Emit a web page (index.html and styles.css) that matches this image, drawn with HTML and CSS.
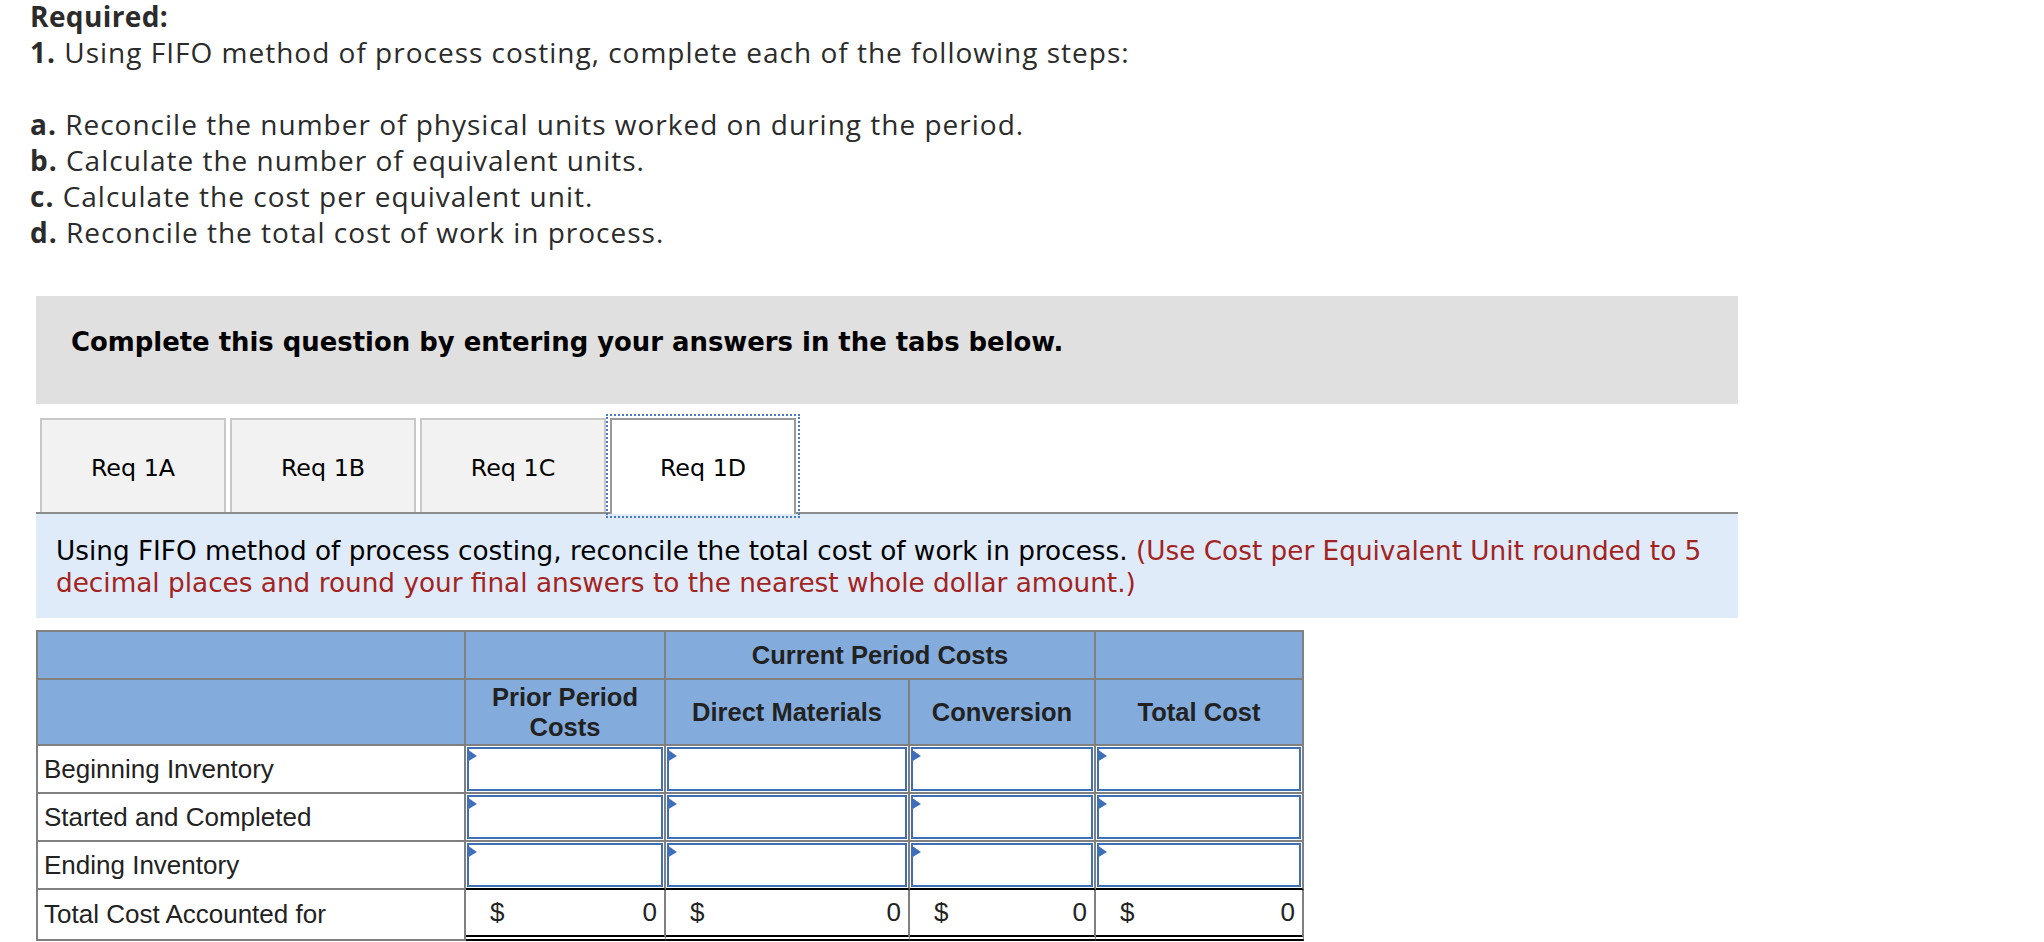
FILE: index.html
```html
<!DOCTYPE html>
<html lang="en">
<head>
<meta charset="utf-8">
<title>FIFO process costing – Req 1D</title>
<link rel="stylesheet" href="styles.css">
</head>
<body>
<main class="page">
  <div class="prompt">
    <p class="prompt-title">Required:</p>
    <p class="prompt-lead"><b>1.</b> Using FIFO method of process costing, complete each of the following steps:</p>
    <ul class="steps">
      <li><b>a.</b> Reconcile the number of physical units worked on during the period.</li>
      <li><b>b.</b> Calculate the number of equivalent units.</li>
      <li><b>c.</b> Calculate the cost per equivalent unit.</li>
      <li><b>d.</b> Reconcile the total cost of work in process.</li>
    </ul>
  </div>

  <section class="workspace">
    <div class="notice">Complete this question by entering your answers in the tabs below.</div>

    <div class="tabs" role="tablist">
      <button class="tab" role="tab" type="button">Req 1A</button>
      <button class="tab" role="tab" type="button">Req 1B</button>
      <button class="tab" role="tab" type="button">Req 1C</button>
      <button class="tab is-active" role="tab" type="button" aria-selected="true">Req 1D</button>
    </div>

    <div class="panel" role="tabpanel">
      <p class="directions">Using FIFO method of process costing, reconcile the total cost of work in process. <span class="hint">(Use Cost per Equivalent Unit rounded to 5 decimal places and round your final answers to the nearest whole dollar amount.)</span></p>

      <table class="cost-table">
        <colgroup>
          <col class="c-label">
          <col class="c-prior">
          <col class="c-dm">
          <col class="c-conv">
          <col class="c-total">
        </colgroup>
        <thead>
          <tr class="head-top">
            <th></th>
            <th></th>
            <th colspan="2">Current Period Costs</th>
            <th></th>
          </tr>
          <tr class="head-sub">
            <th></th>
            <th>Prior Period Costs</th>
            <th>Direct Materials</th>
            <th>Conversion</th>
            <th>Total Cost</th>
          </tr>
        </thead>
        <tbody>
          <tr class="row">
            <td class="label">Beginning Inventory</td>
            <td class="entry"><div class="field"><input type="text" aria-label="Beginning Inventory prior period costs"></div></td>
            <td class="entry"><div class="field"><input type="text" aria-label="Beginning Inventory direct materials"></div></td>
            <td class="entry"><div class="field"><input type="text" aria-label="Beginning Inventory conversion"></div></td>
            <td class="entry"><div class="field"><input type="text" aria-label="Beginning Inventory total cost"></div></td>
          </tr>
          <tr class="row">
            <td class="label">Started and Completed</td>
            <td class="entry"><div class="field"><input type="text" aria-label="Started and Completed prior period costs"></div></td>
            <td class="entry"><div class="field"><input type="text" aria-label="Started and Completed direct materials"></div></td>
            <td class="entry"><div class="field"><input type="text" aria-label="Started and Completed conversion"></div></td>
            <td class="entry"><div class="field"><input type="text" aria-label="Started and Completed total cost"></div></td>
          </tr>
          <tr class="row row-last">
            <td class="label">Ending Inventory</td>
            <td class="entry"><div class="field"><input type="text" aria-label="Ending Inventory prior period costs"></div></td>
            <td class="entry"><div class="field"><input type="text" aria-label="Ending Inventory direct materials"></div></td>
            <td class="entry"><div class="field"><input type="text" aria-label="Ending Inventory conversion"></div></td>
            <td class="entry"><div class="field"><input type="text" aria-label="Ending Inventory total cost"></div></td>
          </tr>
          <tr class="row-total">
            <td class="label">Total Cost Accounted for</td>
            <td class="sum"><div class="sum-inner"><span>$</span><span>0</span></div></td>
            <td class="sum"><div class="sum-inner"><span>$</span><span>0</span></div></td>
            <td class="sum"><div class="sum-inner"><span>$</span><span>0</span></div></td>
            <td class="sum"><div class="sum-inner"><span>$</span><span>0</span></div></td>
          </tr>
        </tbody>
      </table>
    </div>
  </section>
</main>
</body>
</html>
```

FILE: styles.css
```css
* {
  box-sizing: border-box;
}

body {
  margin: 0;
  background: #ffffff;
}

/* ---------- prompt ---------- */
.prompt {
  margin-top: -2px;
  padding-left: 30px;
  font-family: "Open Sans", Lato, sans-serif;
  font-size: 28px;
  line-height: 36px;
  letter-spacing: 1px;
  color: #2b2b2b;
}

.prompt p {
  margin: 0;
}

.prompt-title {
  font-weight: 700;
  letter-spacing: 0.4px;
}

.prompt-lead {
  margin-bottom: 36px !important;
}

.prompt b {
  font-weight: 700;
}

.steps {
  list-style: none;
  margin: 0;
  padding: 0;
}

/* ---------- workspace ---------- */
.workspace {
  margin: 46px 0 0 36px;
  width: 1702px;
}

.notice {
  height: 108px;
  padding: 30px 35px 0;
  background: #e0e0e0;
  font-family: "DejaVu Sans", Verdana, sans-serif;
  font-weight: 700;
  font-size: 25.9px;
  line-height: 32px;
  color: #000;
}

/* ---------- tabs ---------- */
.tabs {
  display: flex;
  gap: 4px;
  padding: 14px 0 0 4px;
  border-bottom: 2px solid #8c8c8c;
}

.tab {
  display: flex;
  align-items: center;
  justify-content: center;
  width: 186px;
  height: 94px;
  margin: 0;
  padding: 4px 0 0;
  border: 2px solid #c8c8c8;
  border-bottom: 0;
  background: #f2f2f2;
  font-family: "DejaVu Sans", Verdana, sans-serif;
  font-size: 23.8px;
  color: #000;
  cursor: pointer;
}

.tab.is-active {
  height: 96px;
  margin-bottom: -2px;
  padding-bottom: 2px;
  background: #ffffff;
  border-color: #999999;
  outline: 2px dotted #4a7cc4;
  outline-offset: 2px;
}

/* ---------- panel ---------- */
.directions {
  margin: 0;
  padding: 21px 20px 19px;
  background: #dfebf8;
  font-family: "DejaVu Sans", Verdana, sans-serif;
  font-size: 26.3px;
  line-height: 32px;
  color: #000;
}

.hint {
  color: #a3231f;
}

/* ---------- table ---------- */
.cost-table {
  margin-top: 12px;
  width: 1268px;
  table-layout: fixed;
  border-collapse: separate;
  border-spacing: 0;
  border-top: 2px solid #808080;
  border-left: 2px solid #808080;
  font-family: "Liberation Sans", Arial, sans-serif;
  color: #222;
}

.c-label { width: 428px; }
.c-prior { width: 200px; }
.c-dm    { width: 244px; }
.c-conv  { width: 186px; }
.c-total { width: 208px; }

.cost-table th,
.cost-table td {
  padding: 0;
  border-right: 2px solid #808080;
  border-bottom: 2px solid #808080;
  vertical-align: middle;
}

.cost-table th {
  background: #83acdd;
  font-weight: 700;
  font-size: 25.5px;
  line-height: 30px;
  text-align: center;
  color: #222;
}

.head-top {
  height: 48px;
}

.head-sub {
  height: 66px;
}

.row {
  height: 48px;
}

.row-total {
  height: 51px;
}

.label {
  padding-left: 6px !important;
  font-size: 26px;
  white-space: nowrap;
}

.entry {
  padding: 1px !important;
}

.row-last .entry {
  border-bottom-color: #000 !important;
}

.field {
  position: relative;
  height: 44px;
}

.field::before {
  content: "";
  position: absolute;
  left: 0;
  top: 2px;
  border-left: 10px solid #3f6fb6;
  border-top: 7px solid transparent;
  border-bottom: 6px solid transparent;
}

.field input {
  display: block;
  width: 100%;
  height: 100%;
  margin: 0;
  padding: 0 8px;
  border: 2px solid #3f6fb6;
  background: #fff;
  font-family: "Liberation Sans", Arial, sans-serif;
  font-size: 26px;
  text-align: right;
  color: #222;
  outline: none;
}

.sum {
  padding: 0 7px 0 24px !important;
  border-bottom: 6px double #000 !important;
  font-size: 26px;
}

.sum-inner {
  display: flex;
  justify-content: space-between;
}
```
